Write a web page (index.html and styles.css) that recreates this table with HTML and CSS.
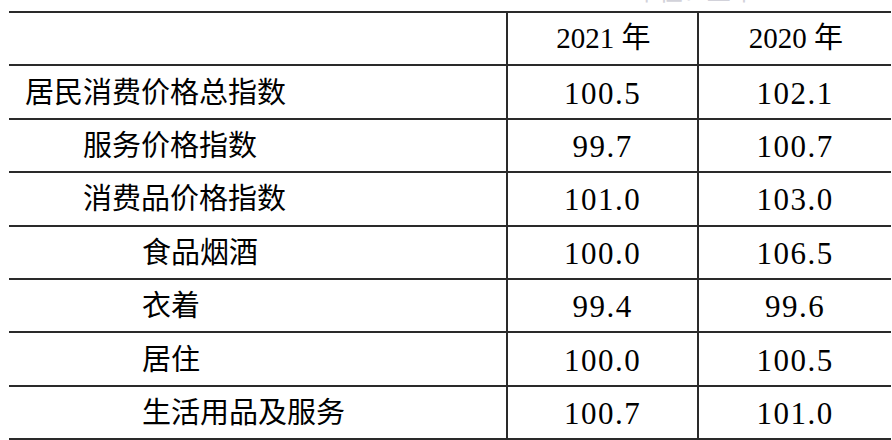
FILE: index.html
```html
<!DOCTYPE html>
<html lang="zh-CN">
<head>
<meta charset="utf-8">
<title>居民消费价格指数</title>
<link rel="stylesheet" href="styles.css">
</head>
<body>
<div class="caption"><span class="caption-text">单位：上年=100</span></div>
<table class="cpi">
  <colgroup>
    <col class="c-name">
    <col class="c-val">
    <col class="c-val2">
  </colgroup>
  <thead>
    <tr>
      <th class="name"></th>
      <th class="val">2021 年</th>
      <th class="val">2020 年</th>
    </tr>
  </thead>
  <tbody>
    <tr><td class="name l1">居民消费价格总指数</td><td class="val">100.5</td><td class="val">102.1</td></tr>
    <tr><td class="name l2">服务价格指数</td><td class="val">99.7</td><td class="val">100.7</td></tr>
    <tr><td class="name l2">消费品价格指数</td><td class="val">101.0</td><td class="val">103.0</td></tr>
    <tr><td class="name l3">食品烟酒</td><td class="val">100.0</td><td class="val">106.5</td></tr>
    <tr><td class="name l3">衣着</td><td class="val">99.4</td><td class="val">99.6</td></tr>
    <tr><td class="name l3">居住</td><td class="val">100.0</td><td class="val">100.5</td></tr>
    <tr><td class="name l3">生活用品及服务</td><td class="val">100.7</td><td class="val">101.0</td></tr>
  </tbody>
</table>
</body>
</html>
```
FILE: styles.css
```css
html, body {
  margin: 0;
  padding: 0;
  background: #ffffff;
}

body {
  width: 892px;
  height: 440px;
  overflow: hidden;
  color: #000;
  font-family: "Noto Sans CJK SC", sans-serif;
}

.caption {
  height: 11px;
  overflow: hidden;
  display: flex;
  justify-content: flex-end;
  padding-right: 84px;
}

.caption-text {
  display: block;
  font-size: 24px;
  line-height: 24px;
  margin-top: -22px;
  color: #d2d2da;
}

.cpi {
  margin-left: 9px;
  width: 882px;
  border-collapse: collapse;
  table-layout: fixed;
}

.c-name { width: 498px; }
.c-val { width: 191px; }
.c-val2 { width: 193px; }

.cpi th,
.cpi td {
  box-sizing: border-box;
  height: 53.4px;
  padding: 0;
  border-top: 2px solid #2a2a2a;
  border-bottom: 2px solid #2a2a2a;
  font-weight: normal;
  vertical-align: middle;
  line-height: 1;
}

.cpi .val {
  border-left: 2px solid #2a2a2a;
  text-align: center;
}

.cpi td.val {
  font-family: "Liberation Serif", "Noto Sans CJK SC", serif;
  font-size: 31px;
  letter-spacing: 1.5px;
  padding-top: 2px;
}

.cpi th.val {
  font-family: "Liberation Serif", "Noto Sans CJK SC", serif;
  font-size: 29px;
  padding-left: 2px;
}

.cpi td.name {
  font-family: "Noto Sans CJK SC", sans-serif;
  font-size: 29px;
  text-align: left;
  padding-bottom: 4px;
}

.l1 { padding-left: 16px !important; }
.l2 { padding-left: 74px !important; }
.l3 { padding-left: 133px !important; }
```
